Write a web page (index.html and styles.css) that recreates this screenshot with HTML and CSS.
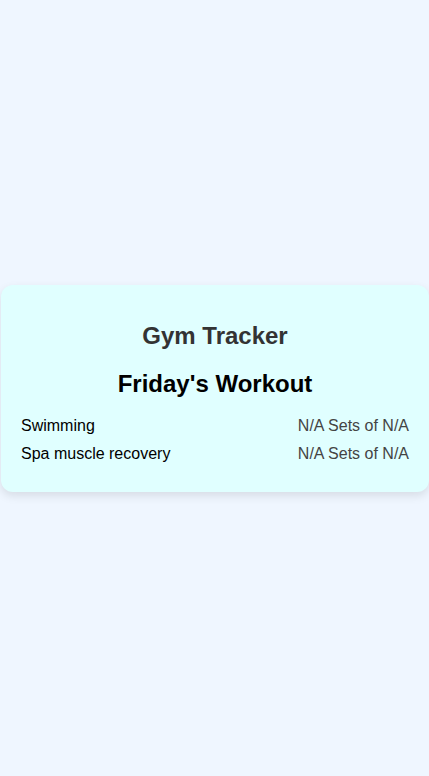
FILE: index.html
```html
<!DOCTYPE html>
<html lang="en">
<head>
<meta charset="utf-8">
<title>Gym Tracker</title>
<link rel="stylesheet" href="styles.css">
</head>
<body>
<main class="card">
  <h1 class="title">Gym Tracker</h1>
  <h2 class="day">Friday's Workout</h2>
  <ul class="list">
    <li class="row"><span class="name">Swimming</span><span class="sets">N/A Sets of N/A</span></li>
    <li class="row"><span class="name">Spa muscle recovery</span><span class="sets">N/A Sets of N/A</span></li>
  </ul>
</main>
</body>
</html>
```
FILE: styles.css
```css
html, body {
  margin: 0;
  padding: 0;
}
body {
  background: #eff6ff;
  font-family: "Liberation Sans", Arial, sans-serif;
  min-height: 100vh;
  display: flex;
  align-items: center;
  justify-content: center;
  padding: 0 0 0 1px;
  box-sizing: border-box;
}
.card {
  width: 100%;
  background: #e0ffff;
  border-radius: 12px;
  box-shadow: 0 4px 10px rgba(0, 0, 0, 0.1);
  padding: 37px 20px 28px;
  box-sizing: border-box;
}
.title {
  margin: 0;
  font-size: 24px;
  line-height: 28px;
  font-weight: bold;
  color: #333;
  text-align: center;
}
.day {
  margin: 20px 0 0;
  font-size: 24px;
  line-height: 28px;
  font-weight: bold;
  color: #000;
  text-align: center;
}
.list {
  list-style: none;
  margin: 18px 0 0;
  padding: 0;
  display: flex;
  flex-direction: column;
  gap: 8px;
}
.row {
  display: flex;
  justify-content: space-between;
  font-size: 16px;
  line-height: 20px;
}
.name {
  color: #000;
}
.sets {
  color: #444;
}
```
